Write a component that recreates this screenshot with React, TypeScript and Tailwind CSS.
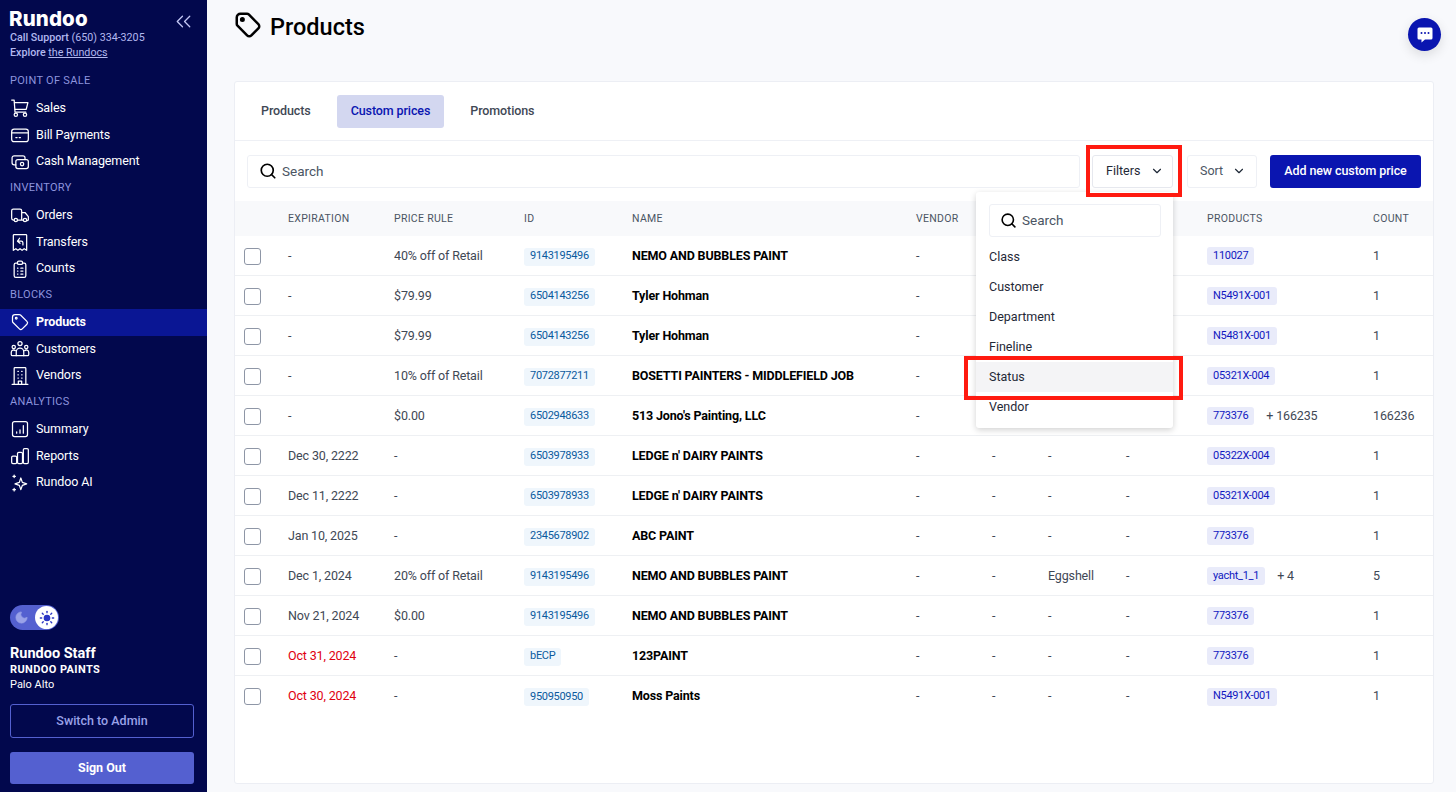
import { ChevronDown, ChevronsLeft, Moon, Search, Sun } from "lucide-react"
import type { ReactNode } from "react"

function Icon({ children, className = "w-[20px] h-[20px]", stroke = "1.5" }: { children: ReactNode; className?: string; stroke?: string }) {
  return (
    <svg viewBox="0 0 24 24" fill="none" stroke="currentColor" strokeWidth={stroke} strokeLinecap="round" strokeLinejoin="round" className={className}>
      {children}
    </svg>
  )
}

const tagPath = (
  <>
    <path d="M7.5 6.5a1 1 0 1 0 0 2 1 1 0 0 0 0-2" />
    <path d="M3 6v5.172a2 2 0 0 0 .586 1.414l7.71 7.71a2.41 2.41 0 0 0 3.408 0l5.592-5.592a2.41 2.41 0 0 0 0-3.408l-7.71-7.71A2 2 0 0 0 11.172 3H6a3 3 0 0 0-3 3" />
  </>
)

const navIcons: Record<string, ReactNode> = {
  Sales: (
    <>
      <path d="M2 2.500h3l1 14.500h13" />
      <path d="M5.300 5.500H21.500l-2 8H6" />
      <circle cx="7" cy="20" r="2" />
      <circle cx="18" cy="20" r="2" />
    </>
  ),
  "Bill Payments": (
    <>
      <rect x="2" y="5" width="20" height="15" rx="3" />
      <path d="M2 9.500h20M7 15h1.500M11 15h1.500" />
    </>
  ),
  "Cash Management": (
    <>
      <rect x="7" y="9" width="15" height="11" rx="2.500" />
      <circle cx="14.500" cy="14.500" r="2" />
      <path d="M18 9V7a2.500 2.500 0 0 0-2.500-2.500H5A2.500 2.500 0 0 0 2.500 7v6A2.500 2.500 0 0 0 5 15.500h2" />
    </>
  ),
  Orders: (
    <>
      <circle cx="7" cy="18" r="2" />
      <circle cx="18" cy="18" r="2" />
      <path d="M5 18H4a2 2 0 0 1-2-2V7a2 2 0 0 1 2-2h8a2 2 0 0 1 2 2v11M9 18h7M14 9h4l4 5v3a1 1 0 0 1-2 1" />
    </>
  ),
  Transfers: (
    <>
      <path d="M4 22V4a1 1 0 0 1 1-1h14a1 1 0 0 1 1 1v18l-3-2-2.500 2-2.500-2-2.500 2L7 20z" />
      <path d="M15.500 15.500v-2.500a2 2 0 0 0-2-2H9M11.500 7.500 9 11l3 2.500" />
    </>
  ),
  Counts: (
    <>
      <path d="M9 5H7a2 2 0 0 0-2 2v13a2 2 0 0 0 2 2h10a2 2 0 0 0 2-2V7a2 2 0 0 0-2-2h-2" />
      <rect x="9" y="2.500" width="6" height="4" rx="1.500" />
      <path d="M9 11h.5M13 11h2.500M9 14.500h.5M13 14.500h2.500M9 18h.5M13 18h2.500" />
    </>
  ),
  Products: tagPath,
  Customers: (
    <>
      <circle cx="12" cy="5.500" r="2.500" />
      <circle cx="4.500" cy="9.500" r="2" />
      <circle cx="19.500" cy="9.500" r="2" />
      <path d="M7.500 20v-4.500a4.500 4.500 0 0 1 9 0V20z" />
      <path d="M7.500 20H3a1.500 1.500 0 0 1-1.500-1.500V16a3 3 0 0 1 5-2M16.500 20H21a1.500 1.500 0 0 0 1.500-1.500V16a3 3 0 0 0-5-2" />
    </>
  ),
  Vendors: (
    <>
      <path d="M2.500 22h19M5 22V3a1 1 0 0 1 1-1h12a1 1 0 0 1 1 1v19" />
      <path d="M9.500 6.500h.5M14 6.500h.5M9.500 10.500h.5M14 10.500h.5M9.500 14.500h.5M14 14.500h.5M10 22v-4h4v4" />
    </>
  ),
  Summary: (
    <>
      <rect x="3" y="3" width="18" height="18" rx="2.500" />
      <path d="M8 17v-1.500M12 17v-4M16 17V8" />
    </>
  ),
  Reports: (
    <>
      <rect x="2" y="12" width="6" height="9" rx="1.500" />
      <rect x="9" y="7.500" width="6" height="13.500" rx="1.500" />
      <rect x="16" y="3" width="6" height="18" rx="1.500" />
    </>
  ),
  "Rundoo AI": (
    <>
      <path d="M13 6l1.800 5.200L20 13l-5.200 1.800L13 20l-1.800-5.200L6 13l5.200-1.800z" />
      <path d="M5 2.500v3M3.500 4h3M5 18.500v3M3.500 20h3" />
    </>
  ),
}

const navGroups = [
  { label: "POINT OF SALE", items: ["Sales", "Bill Payments", "Cash Management"] },
  { label: "INVENTORY", items: ["Orders", "Transfers", "Counts"] },
  { label: "BLOCKS", items: ["Products", "Customers", "Vendors"] },
  { label: "ANALYTICS", items: ["Summary", "Reports", "Rundoo AI"] },
]

function Sidebar() {
  return (
    <aside className="w-[207px] h-[792px] shrink-0 bg-[#02084d] text-white flex flex-col justify-between">
      <div>
        <div className="relative px-[10px] pt-[7px]">
          <div className="-ml-[1px] font-['Inter',sans-serif] text-[20.500px] leading-[24px] font-extrabold tracking-[0.1px]">Rundoo</div>
          <div className="mt-[-1px] text-[10.700px] leading-[15px] text-[#b3b8ef]">
            <span className="font-medium">Call Support</span> (650) 334-3205
          </div>
          <div className="text-[10.700px] leading-[15px] text-[#b3b8ef]">
            <span className="font-medium">Explore</span> <span className="underline">the Rundocs</span>
          </div>
          <ChevronsLeft className="absolute left-[171px] top-[9px] w-[25px] h-[25px] text-[#c3c7f5]" strokeWidth={1.25} />
        </div>
        <nav className="mt-[8px]">
          {navGroups.map((group) => (
            <div key={group.label}>
              <div className="h-[26.75px] px-[10px] flex items-center text-[11px] tracking-[0.3px] text-[#8d94de]">{group.label}</div>
              {group.items.map((item) => {
                const active = item === "Products"
                return (
                  <div key={item} className={`h-[26.75px] pl-[10px] flex items-center gap-[6px] text-[12.500px] tracking-[-0.1px] ${active ? "bg-[#0a1694] font-bold" : ""}`}>
                    <Icon>{navIcons[item]}</Icon>
                    <span>{item}</span>
                  </div>
                )
              })}
            </div>
          ))}
        </nav>
      </div>
      <div className="px-[10px] pb-[8px]">
        <div className="w-[49px] h-[25px] rounded-full bg-[#5460d0] flex items-center justify-between pl-[4px] pr-[1px]">
          <Moon className="w-[15px] h-[15px] text-[#9aa2e8]" fill="#9aa2e8" strokeWidth={1} />
          <div className="w-[23px] h-[23px] rounded-full bg-white flex items-center justify-center">
            <Sun className="w-[16px] h-[16px] text-[#2b36c4]" fill="#2b36c4" strokeWidth={2} />
          </div>
        </div>
        <div className="mt-[15px] text-[14.500px] leading-[18px] font-bold">Rundoo Staff</div>
        <div className="mt-[-1px] text-[11px] leading-[15px] font-bold tracking-[0.4px]">RUNDOO PAINTS</div>
        <div className="text-[11px] leading-[15px]">Palo Alto</div>
        <div className="mt-[12px] h-[34px] w-[184px] rounded-[3px] border border-[#5460d0] flex items-center justify-center text-[12.500px] font-medium text-[#9aa2e8]">
          Switch to Admin
        </div>
        <div className="mt-[14px] h-[32px] w-[184px] rounded-[3px] bg-[#5460d0] flex items-center justify-center text-[12.500px] font-bold">Sign Out</div>
      </div>
    </aside>
  )
}

const columns = "grid grid-cols-[53px_106px_130px_108px_284px_76px_56px_78px_81px_166px_60px]"

const rows = [
  { exp: "-", rule: "40% off of Retail", id: "9143195496", name: "NEMO AND BUBBLES PAINT", finish: "-", product: "110027", more: "", count: "1" },
  { exp: "-", rule: "$79.99", id: "6504143256", name: "Tyler Hohman", finish: "-", product: "N5491X-001", more: "", count: "1" },
  { exp: "-", rule: "$79.99", id: "6504143256", name: "Tyler Hohman", finish: "-", product: "N5481X-001", more: "", count: "1" },
  { exp: "-", rule: "10% off of Retail", id: "7072877211", name: "BOSETTI PAINTERS - MIDDLEFIELD JOB", finish: "-", product: "05321X-004", more: "", count: "1" },
  { exp: "-", rule: "$0.00", id: "6502948633", name: "513 Jono's Painting, LLC", finish: "-", product: "773376", more: "+ 166235", count: "166236" },
  { exp: "Dec 30, 2222", rule: "-", id: "6503978933", name: "LEDGE n' DAIRY PAINTS", finish: "-", product: "05322X-004", more: "", count: "1" },
  { exp: "Dec 11, 2222", rule: "-", id: "6503978933", name: "LEDGE n' DAIRY PAINTS", finish: "-", product: "05321X-004", more: "", count: "1" },
  { exp: "Jan 10, 2025", rule: "-", id: "2345678902", name: "ABC PAINT", finish: "-", product: "773376", more: "", count: "1" },
  { exp: "Dec 1, 2024", rule: "20% off of Retail", id: "9143195496", name: "NEMO AND BUBBLES PAINT", finish: "Eggshell", product: "yacht_1_1", more: "+ 4", count: "5" },
  { exp: "Nov 21, 2024", rule: "$0.00", id: "9143195496", name: "NEMO AND BUBBLES PAINT", finish: "-", product: "773376", more: "", count: "1" },
  { exp: "Oct 31, 2024", rule: "-", id: "bECP", name: "123PAINT", finish: "-", product: "773376", more: "", count: "1", expired: true },
  { exp: "Oct 30, 2024", rule: "-", id: "950950950", name: "Moss Paints", finish: "-", product: "N5491X-001", more: "", count: "1", expired: true },
]

function Table() {
  return (
    <div className="text-[12.500px] tracking-[-0.15px] text-[#3f4855]">
      <div className={`${columns} h-[35px] items-center bg-[#f8f9fb] text-[10.500px] tracking-[0.3px] text-[#4b5563]`}>
        <span />
        <span>EXPIRATION</span>
        <span>PRICE RULE</span>
        <span>ID</span>
        <span>NAME</span>
        <span>VENDOR</span>
        <span />
        <span />
        <span />
        <span>PRODUCTS</span>
        <span>COUNT</span>
      </div>
      {rows.map((row, i) => {
        // the first five rows sit under the open filter menu
        const covered = i < 5
        return (
          <div key={i} className={`${columns} h-[40px] pt-[1px] items-center ${i < rows.length - 1 ? "border-b border-[#eef0f3]" : ""}`}>
            <div className="pl-[9px]">
              <div className="w-[17px] h-[17px] rounded-[3px] border-[1.5px] border-[#8e96a6] bg-white" />
            </div>
            <span className={row.expired ? "text-[#e0000f]" : ""}>{row.exp}</span>
            <span>{row.rule}</span>
            <span>
              <span className="inline-flex h-[18px] items-center rounded-[3px] bg-[#eff6fc] px-[6px] text-[11px] tracking-[-0.3px] text-[#0a5a9e]">{row.id}</span>
            </span>
            <span className="font-bold text-black">{row.name}</span>
            <span>-</span>
            <span>{covered ? "" : "-"}</span>
            <span>{covered ? "" : row.finish}</span>
            <span>{covered ? "" : "-"}</span>
            <span className="flex items-center">
              <span className="inline-flex h-[18px] items-center rounded-[3px] bg-[#e9ebfa] px-[6px] text-[11px] tracking-[-0.3px] text-[#1018c0]">{row.product}</span>
              {row.more && <span className="ml-[12px]">{row.more}</span>}
            </span>
            <span>{row.count}</span>
          </div>
        )
      })}
    </div>
  )
}

function Card() {
  return (
    <section className="w-[1200px] h-[703px] bg-white border border-[#eceef4] rounded-[3px] overflow-hidden">
      <div className="h-[59px] px-[12px] flex items-center gap-[12px] border-b border-[#eef0f5] text-[12.500px] tracking-[-0.1px] font-medium text-[#3f4855]">
        <div className="h-[33px] px-[14px] flex items-center">Products</div>
        <div className="h-[33px] px-[14px] flex items-center rounded-[3px] bg-[#d3d7f0] text-[#0a15b0]">Custom prices</div>
        <div className="h-[33px] px-[14px] flex items-center">Promotions</div>
      </div>
      <div className="h-[60px] px-[12px] flex items-center">
        <div className="flex-1 h-[33px] px-[11px] rounded-[3px] border border-[#eef0f5] flex items-center gap-[5px] text-[13.500px] text-[#4b5563]">
          <Search className="w-[18px] h-[18px] text-black" strokeWidth={2.25} />
          Search
        </div>
        <div className="ml-[12px] w-[81px] h-[33px] pl-[13px] rounded-[3px] border border-[#e6e8ee] flex items-center gap-[10px] text-[12.500px] text-[#1f2937]">
          Filters
          <ChevronDown className="w-[14px] h-[14px]" />
        </div>
        <div className="ml-[14px] w-[70px] h-[33px] pl-[12px] rounded-[3px] border border-[#eef0f5] flex items-center gap-[9px] text-[12.500px] text-[#4b5563]">
          Sort
          <ChevronDown className="w-[14px] h-[14px] text-[#1f2937]" />
        </div>
        <div className="ml-[13px] w-[151px] h-[33px] rounded-[3px] bg-[#0a15b0] flex items-center justify-center text-[12.500px] tracking-[-0.1px] font-medium text-white">
          Add new custom price
        </div>
      </div>
      <Table />
    </section>
  )
}

function FilterMenu() {
  const options = ["Class", "Customer", "Department", "Fineline", "Status", "Vendor"]
  return (
    <div className="absolute left-[976px] top-[192px] w-[197px] h-[236px] bg-white rounded-[3px] shadow-[0_2px_6px_rgba(0,0,0,0.18)] pt-[12px]">
      <div className="mx-[13px] w-[172px] h-[33px] rounded-[3px] border border-[#eef0f5] flex items-center gap-[5px] px-[10px] text-[13.500px] text-[#4b5563]">
        <Search className="w-[17px] h-[17px] text-black" strokeWidth={2.25} />
        Search
      </div>
      <div className="mt-[5px]">
        {options.map((o) => (
          <div key={o} className={`h-[30px] pt-[1px] px-[13px] flex items-center text-[12.500px] text-[#1f2937] ${o === "Status" ? "bg-[#f4f4f6]" : ""}`}>
            {o}
          </div>
        ))}
      </div>
    </div>
  )
}

export default function App() {
  return (
    <div className="relative w-[1456px] h-[792px] overflow-hidden flex bg-[#f8f9fc] font-['Roboto',sans-serif]">
      <Sidebar />
      <main className="flex-1 pl-[27px]">
        <div className="h-[81px] flex items-start pt-[10px] gap-[7px]">
          <Icon className="w-[30px] h-[30px] text-black -ml-[1px]" stroke="2">{tagPath}</Icon>
          <h1 className="text-[23.500px] leading-[34px] font-medium text-black">Products</h1>
        </div>
        <Card />
      </main>

      <FilterMenu />

      {/* red callouts drawn on top of the screenshot */}
      <div className="absolute left-[1086px] top-[145px] w-[96px] h-[52px] border-[4px] border-[#ff1a10]" />
      <div className="absolute left-[964px] top-[356px] w-[219px] h-[44px] border-[4px] border-[#ff1a10]" />

      <button className="absolute left-[1408px] top-[18px] w-[33px] h-[33px] rounded-full bg-[#0a15b0] shadow-[0_4px_12px_rgba(0,0,0,0.12)] flex items-center justify-center">
        <svg viewBox="0 0 18 18" className="w-[18px] h-[18px]">
          <path d="M3 1.500h12a1.500 1.500 0 0 1 1.500 1.500v9a1.500 1.500 0 0 1-1.500 1.500H9l-3.500 3v-3H3A1.500 1.500 0 0 1 1.500 12V3A1.500 1.500 0 0 1 3 1.500z" fill="#fff" />
          <circle cx="5.500" cy="7" r="1" fill="#0a15b0" />
          <circle cx="9" cy="7" r="1" fill="#0a15b0" />
          <circle cx="12.500" cy="7" r="1" fill="#0a15b0" />
        </svg>
      </button>
    </div>
  )
}
